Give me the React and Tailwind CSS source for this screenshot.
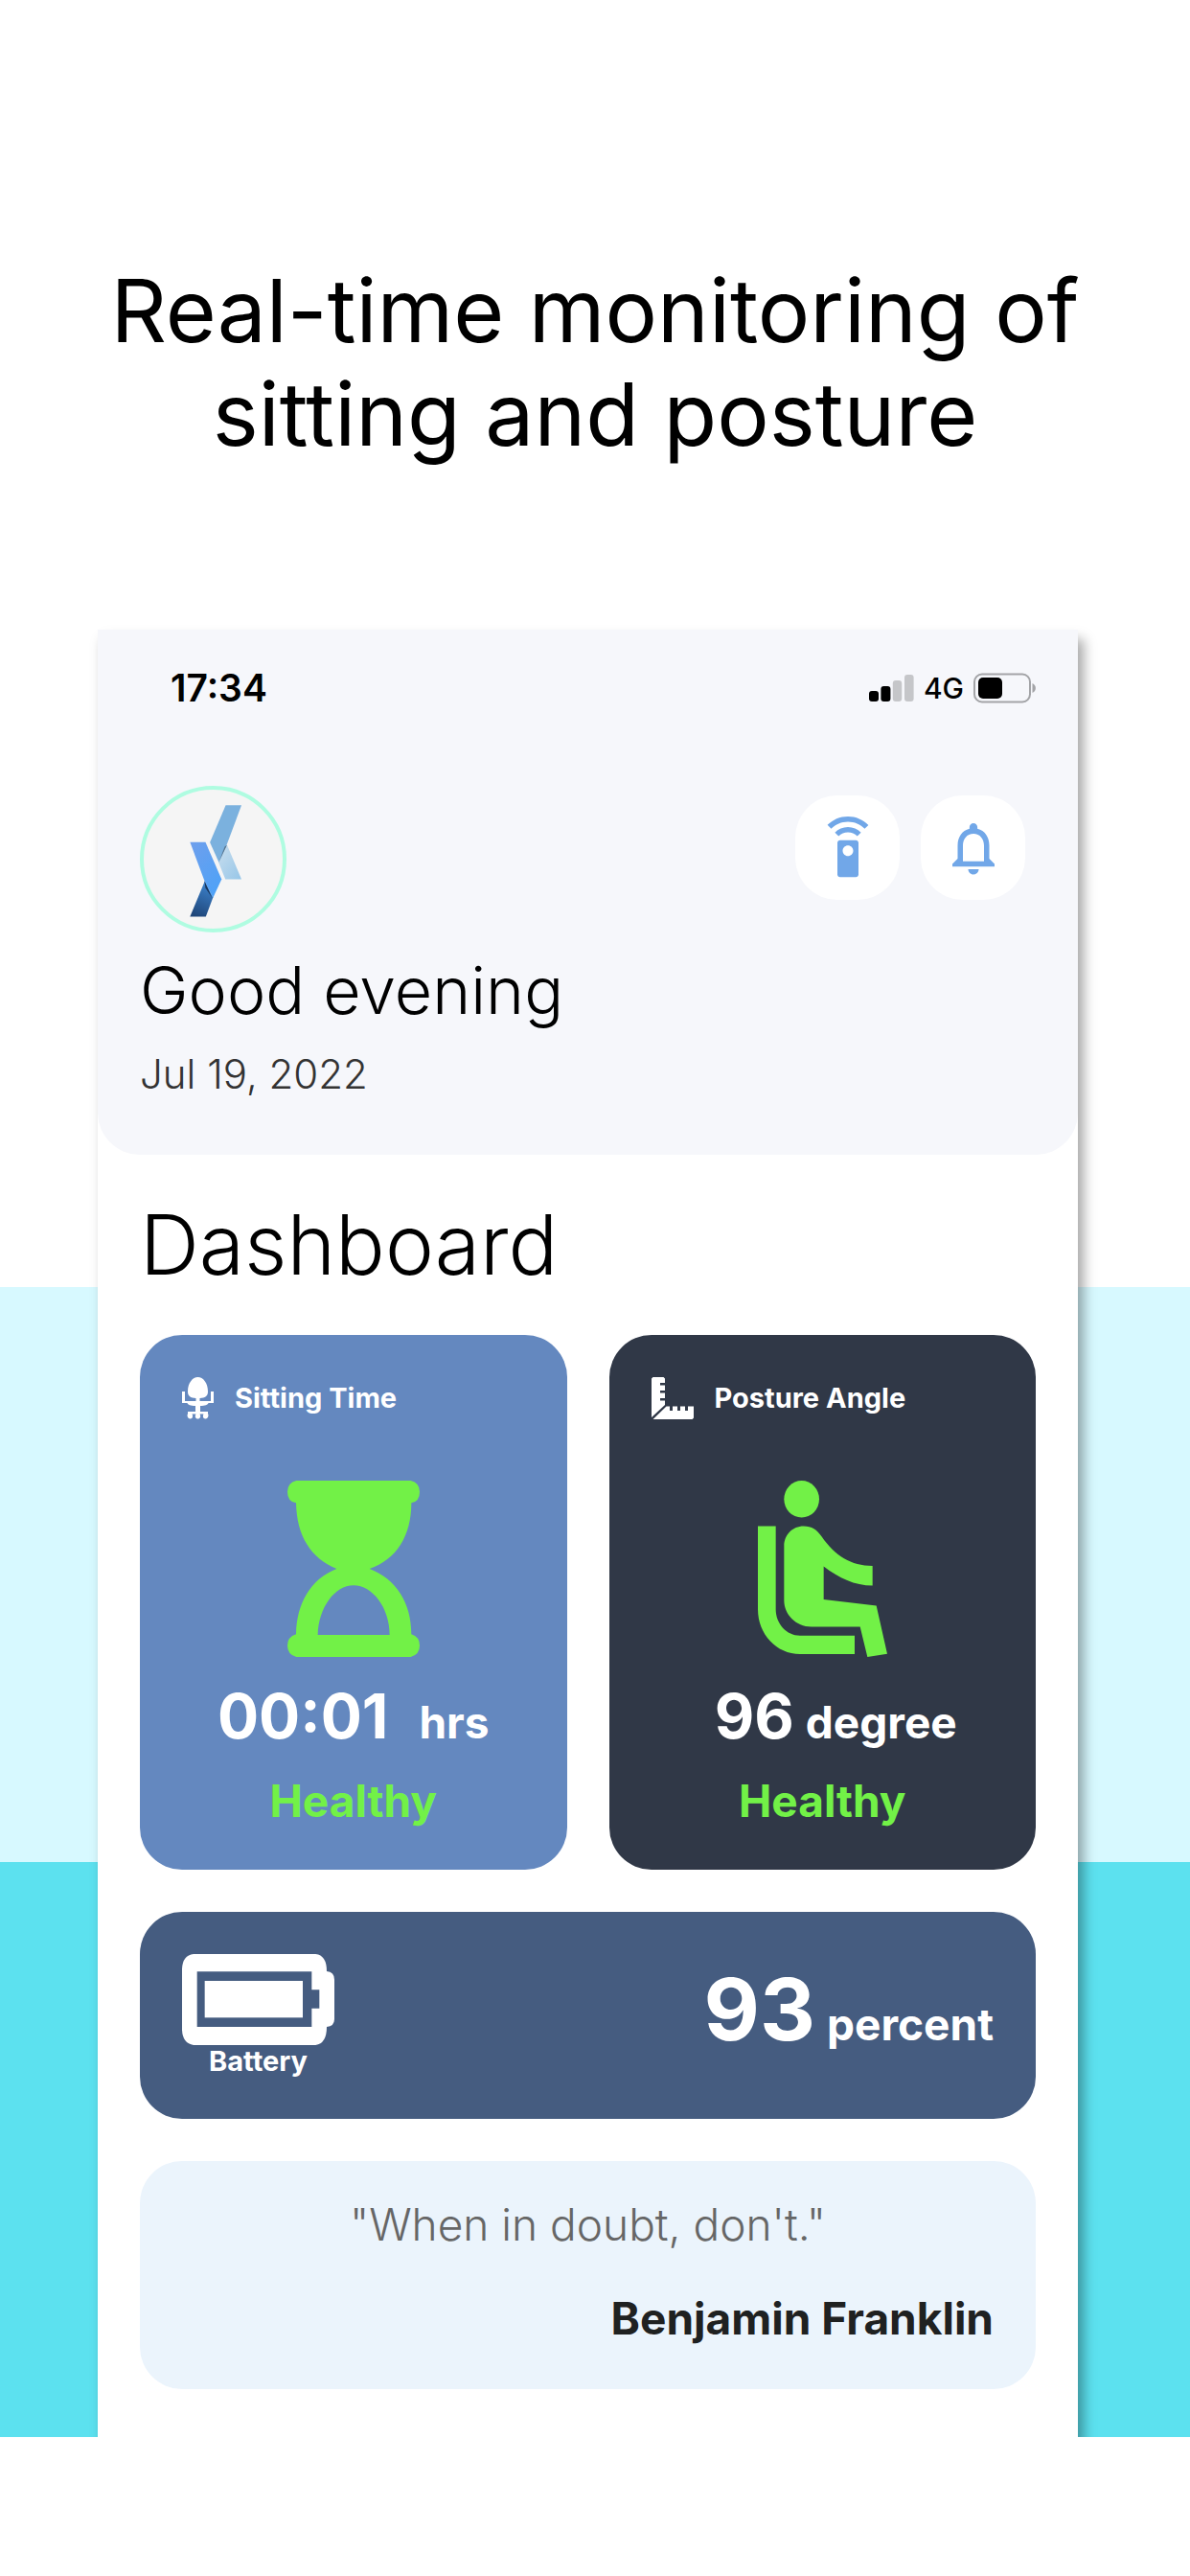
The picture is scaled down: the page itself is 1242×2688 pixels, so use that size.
import { MdNotificationsNone, MdSettingsRemote } from 'react-icons/md';

const QUOTE = { text: '"When in doubt, don\'t."', author: 'Benjamin Franklin' };

export default function App() {
  return (
    <div className="min-h-screen bg-white font-['Inter','Liberation_Sans',sans-serif] text-black">
      <section className="overflow-hidden pt-[270px] bg-[linear-gradient(to_top,#5ce1ef_600px,#d7f9ff_600px,#d7f9ff_1200px,#ffffff_1200px)]">
        <h1 className="text-[91px] leading-[108px] text-center">
          Real-time monitoring of <br />
          sitting and posture
        </h1>
        <div className="mt-[171px] ml-[102px] mr-[117px] bg-white shadow-[6px_10px_12px_rgba(0,0,0,0.35)]">
          <Header />
          <Dashboard />
        </div>
      </section>
    </div>
  );
}

function Header() {
  return (
    <header className="bg-[#f6f7fb] rounded-b-[44px] px-11 pt-[39px] pb-14">
      <StatusBar />
      <div className="mt-20 flex items-start justify-between">
        <Avatar />
        <div className="mt-[10px] mr-[11px] flex gap-[22px]">
          <IconButton label="Remote">
            <MdSettingsRemote size={66} />
          </IconButton>
          <IconButton label="Notifications">
            <MdNotificationsNone size={66} />
          </IconButton>
        </div>
      </div>
      <p className="mt-5 text-[68px] leading-[80px] font-light">Good evening</p>
      <p className="mt-5 text-[42px] leading-[56px] font-light text-[#333333]">Jul 19, 2022</p>
    </header>
  );
}

function StatusBar() {
  return (
    <div className="flex items-center justify-between pl-8">
      <span className="text-[39px] leading-[44px] font-semibold">17:34</span>
      <div className="flex items-center gap-[10px]">
        <svg width="47" height="30" viewBox="0 0 47 30">
          <rect x="0" y="18" width="10" height="11" rx="3" />
          <rect x="12.4" y="13" width="10" height="16" rx="3" />
          <rect x="24.8" y="7" width="9.4" height="22" rx="3" fill="#c5c6c9" />
          <rect x="37" y="1" width="9.6" height="28" rx="3" fill="#c5c6c9" />
        </svg>
        <span className="text-[30px] leading-[44px] font-medium">4G</span>
        <svg width="65" height="32" viewBox="1 0 65 32">
          <rect x="2" y="1.5" width="58" height="29" rx="8" fill="none" stroke="#a3a4a7" strokeWidth="2" />
          <rect x="6" y="5" width="25" height="22" rx="5" />
          <path d="M62.500 11c4.500 2 4.500 8 0 10z" fill="#a3a4a7" />
        </svg>
      </div>
    </div>
  );
}

function Avatar() {
  return (
    <div className="size-[153px] rounded-full border-4 border-[#affce1] bg-[#f5f5f5]">
      <svg className="size-full" viewBox="168 499 405 392" preserveAspectRatio="none">
        <defs>
          <linearGradient id="pale" x1="0" y1="0" x2="1" y2="1">
            <stop offset="0" stopColor="#c9deee" />
            <stop offset="1" stopColor="#96c6e8" />
          </linearGradient>
          <linearGradient id="bright" x1="0" y1="0" x2="0.6" y2="1">
            <stop offset="0" stopColor="#6f9fec" />
            <stop offset="1" stopColor="#4fa2f7" />
          </linearGradient>
          <linearGradient id="navy" x1="0.6" y1="0" x2="0.3" y2="1">
            <stop offset="0" stopColor="#3c82cc" />
            <stop offset="1" stopColor="#1f4679" />
          </linearGradient>
        </defs>
        <path d="M411 655 453 752H406L386 704z" fill="url(#pale)" />
        <path d="M407 543H453L409 657 387 704 361 648z" fill="#7bb1de" />
        <path d="M411 655 387 703 404 660z" fill="#56748e" />
        <path d="M346 757 370 803 349 857H303z" fill="url(#navy)" />
        <path d="M303 647H348L395 752 370 804 345 756z" fill="url(#bright)" />
        <path d="M345 756 367 804 348 776z" fill="#17345a" />
      </svg>
    </div>
  );
}

function IconButton({ label, children }) {
  return (
    <button
      type="button"
      aria-label={label}
      className="size-[109px] rounded-[44px] bg-white text-[#71a7e8] flex items-center justify-center"
    >
      {children}
    </button>
  );
}

function Dashboard() {
  return (
    <main className="px-11 pt-11 pb-[50px]">
      <h2 className="text-[86px] leading-[100px] font-light">Dashboard</h2>
      <div className="mt-11 grid grid-cols-2 gap-11">
        <MetricCard
          className="bg-[#6488bf]"
          icon={<ChairIcon />}
          title="Sitting Time"
          picture={<HourglassIcon />}
        >
          <p className="mt-[22px] flex items-baseline justify-center gap-8 text-[64px] leading-[80px] font-bold">
            00:01 <span className="text-[46px] leading-none">hrs</span>
          </p>
        </MetricCard>
        <MetricCard
          className="bg-[#303847]"
          icon={<RulerIcon />}
          title="Posture Angle"
          picture={<SeatIcon />}
        >
          <p className="mt-[22px] pl-7 flex items-baseline justify-center gap-3 text-[64px] leading-[80px] font-bold">
            96 <span className="text-[46px] leading-none">degree</span>
          </p>
        </MetricCard>
      </div>
      <BatteryCard />
      <QuoteCard />
    </main>
  );
}

function MetricCard({ className, icon, title, picture, children }) {
  return (
    <article className={`rounded-[44px] p-11 text-white ${className}`}>
      <div className="flex items-center gap-[22px]">
        {icon}
        <h3 className="text-[29px] leading-[44px] font-bold">{title}</h3>
      </div>
      <div className="mt-16 flex justify-center">{picture}</div>
      {children}
      <p className="mt-5 text-[46px] leading-[56px] font-bold text-center text-[#72f147]">Healthy</p>
    </article>
  );
}

function BatteryCard() {
  return (
    <article className="mt-11 flex items-center justify-between rounded-[44px] bg-[#455c80] p-11 text-white">
      <div className="flex flex-col items-center">
        <svg width="159" height="95" viewBox="178 234 477 285" fill="#ffffff">
          <path d="M214 234H596Q631 238 631 288Q655 290 655 314V438Q655 460 631 462Q631 514 596 519H214Q180 514 178 472V280Q180 238 214 234zM225 289V462H584V404H608V346H584V289z" fillRule="evenodd" />
          <rect x="249" y="318" width="307" height="115" />
        </svg>
        <h3 className="text-[29px] leading-[33px] font-bold">Battery</h3>
      </div>
      <p className="pb-3 flex items-baseline gap-3 text-[90px] leading-[100px] font-bold">
        93 <span className="text-[46px] leading-none">percent</span>
      </p>
    </article>
  );
}

function QuoteCard() {
  return (
    <figure className="mt-11 rounded-[44px] bg-[#ebf4fc] px-11 pt-[38px] pb-[46px] text-[46px] leading-[56px]">
      <blockquote className="text-center font-light text-[#666666]">{QUOTE.text}</blockquote>
      <figcaption className="mt-[42px] text-right font-bold text-[#1f2121]">{QUOTE.author}</figcaption>
    </figure>
  );
}

function ChairIcon() {
  return (
    <svg width="33" height="44" viewBox="0 0 33 44" fill="#ffffff">
      <path d="M16.500 0C22 0 27 6 27 15C27 20 24 21.500 18.500 22V25H30V15H33V27H27.500C27 29 24 30 19 30V36H27V38.500C28 39 27.500 43.500 24.500 43.500C21.500 43.500 21.500 40 22.500 38.500H18.500C20 41 19 43.500 16.500 43.500C14 43.500 13 41 14.500 38.500H10.500C11.500 40 11.500 43.500 8.500 43.500C5.500 43.500 5 39 6 38.500V36H14V30C9 30 6 29 5.500 27H0V15H3V25H14.500V22C9 21.500 6 20 6 15C6 6 11 0 16.500 0z" />
    </svg>
  );
}

function RulerIcon() {
  return (
    <svg width="44" height="44" viewBox="0 0 44 44" fill="#ffffff">
      <path d="M1.500 0H12.500L14 1.500V6H9V8.500H14V14H9V16.500H14V22H9V24.500H14V29L0 42V1.500z" />
      <path d="M15.500 30.500H19V35H22V30.500H27V35H30V30.500H35V35H38V30.500H44V42.500L42.500 44H1.500z" />
    </svg>
  );
}

function HourglassIcon() {
  return (
    <svg width="138" height="184" viewBox="509 77 414 552" fill="#72f147">
      <path
        fillRule="evenodd"
        d="M537 77H895Q923 84 923 112Q923 142 897 147C897 250 850 325 766 353C850 385 897 460 897 558Q923 566 923 594Q923 622 895 629H537Q509 622 509 594Q509 566 536 558C538 460 582 385 663 353C582 320 538 250 536 147Q509 142 509 112Q509 84 537 77zM604 560H829C829 475 775 405 716 405C657 405 606 475 604 560z"
      />
    </svg>
  );
}

function SeatIcon() {
  return (
    <svg width="135" height="184" viewBox="513 448 405 496" preserveAspectRatio="none" fill="#72f147">
      <ellipse cx="650" cy="500" rx="55" ry="52" />
      <path d="M513 576H569V810C569 851 603 884 645 884H816V936H645C571 936 513 880 513 810z" />
      <path d="M595 632C595 600 622 576 656 576C682 576 698 586 713 606C755 660 805 688 872 688V743C815 743 768 722 719 689V782L884 800 918 935 856 944 833 859H680C633 859 595 825 595 785z" />
    </svg>
  );
}
